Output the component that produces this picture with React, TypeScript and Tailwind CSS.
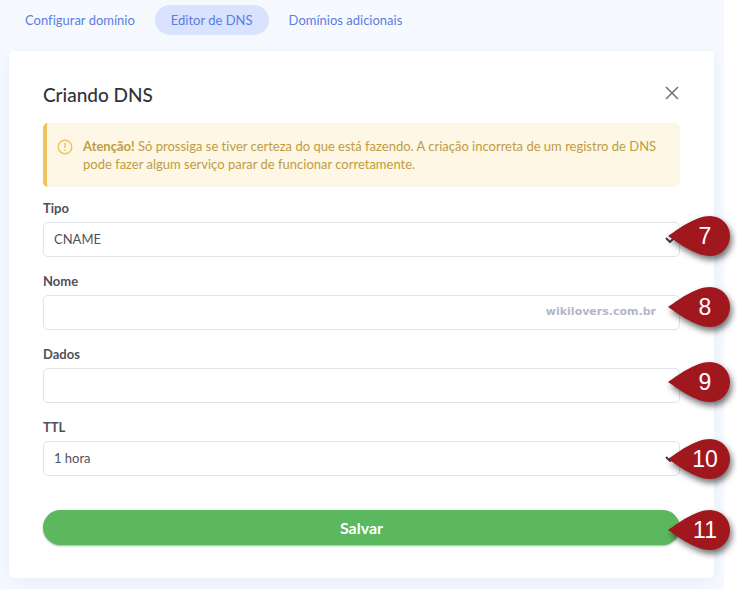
import React from 'react'

const tabs = [
  { label: 'Configurar domínio', active: false },
  { label: 'Editor de DNS', active: true },
  { label: 'Domínios adicionais', active: false },
]

const fieldClass =
  'block h-[35px] w-full appearance-none rounded-[5px] border border-[#dfe3ec] bg-white px-[10px] text-[13px] text-[#50505c] outline-none focus:border-[#5a7de0]'

function Marker({ number, className }: { number: number; className: string }) {
  return (
    <div className={`pointer-events-none absolute -right-[50px] h-10 w-[62px] ${className}`}>
      <svg
        viewBox="0 0 62 40"
        className="block h-full w-full overflow-visible drop-shadow-[2px_4px_3px_rgba(0,0,0,0.55)]"
        aria-hidden="true"
      >
        <path d="M0 20 C9 14 27 0 42 0 A20 20 0 0 1 42 40 C27 40 9 26 0 20 Z" fill="#a0171e" />
      </svg>
      <span className="absolute inset-y-0 right-0 flex w-[50px] items-center justify-center font-['Liberation_Sans',Arial,sans-serif] text-[23px] leading-none text-white">
        {number}
      </span>
    </div>
  )
}

function Chevron() {
  return (
    <svg
      viewBox="0 0 10 6"
      className="pointer-events-none absolute right-[5px] top-[15px] h-[6px] w-[10px]"
      fill="none"
      stroke="#3f4046"
      strokeWidth="2"
      aria-hidden="true"
    >
      <path d="M1 1 L5 5 L9 1" />
    </svg>
  )
}

interface FieldProps {
  id: string
  label: string
  marker: number
  markerClass: string
  children: React.ReactNode
}

function Field({ id, label, marker, markerClass, children }: FieldProps) {
  return (
    <div className="flex flex-col gap-1">
      <label htmlFor={id} className="text-[13px] font-bold leading-5 text-[#50505c]">
        {label}
      </label>
      <div className="relative">
        {children}
        <Marker number={marker} className={markerClass} />
      </div>
    </div>
  )
}

export default function App() {
  return (
    <div className="min-h-screen bg-white pr-[13px] font-[Lato,'Open_Sans',sans-serif] [font-variant-ligatures:none]">
      <div className="min-h-screen bg-[#f6faff] pb-[11px] pl-[9px] pr-[10px] pt-[5px]">
        <nav className="flex h-[30px] items-center gap-1 text-[13px] leading-5">
          {tabs.map((tab) => (
            <a
              key={tab.label}
              href="#"
              className={`flex h-full items-center rounded-full px-4 text-[#5a7de0] ${
                tab.active ? 'bg-[#d9e2ff]' : ''
              }`}
            >
              {tab.label}
            </a>
          ))}
        </nav>

        <main className="mt-4 rounded-[5px] bg-white px-[34px] pb-[33px] pt-7 shadow-[0_4px_16px_rgba(80,110,200,0.09)]">
          <header className="flex items-start justify-between">
            <h1 className="text-[19px] font-medium leading-8 text-[#32323c]">Criando DNS</h1>
            <button type="button" aria-label="Fechar" className="flex h-7 w-4 items-center justify-center text-[#6f6f7c]">
              <svg viewBox="0 0 14 14" className="h-[14px] w-[14px]" fill="none" stroke="currentColor" strokeWidth="1.5" aria-hidden="true">
                <path d="M1 1 L13 13 M13 1 L1 13" />
              </svg>
            </button>
          </header>

          <div
            role="alert"
            className="mt-3 flex gap-[10px] rounded-[5px] border-l-4 border-[#edc55c] bg-[#fef7e6] px-[10px] py-[14px] text-[13px] leading-[18px] text-[#c09c3f]"
          >
            <svg viewBox="0 0 16 16" className="mt-[2px] h-4 w-4 shrink-0" fill="none" stroke="#edc55c" strokeWidth="1.5" aria-hidden="true">
              <circle cx="8" cy="8" r="6.8" />
              <path d="M8 4 V9 M8 10.5 V12" />
            </svg>
            <p>
              <strong className="font-bold">Atenção!</strong> Só prossiga se tiver certeza do que está fazendo. A
              criação incorreta de um registro de DNS pode fazer algum serviço parar de funcionar corretamente.
            </p>
          </div>

          <form className="mt-[11px]" onSubmit={(e) => e.preventDefault()}>
            <div className="flex flex-col gap-[14px]">
              <Field id="tipo" label="Tipo" marker={7} markerClass="-top-1.5">
                <select id="tipo" className={fieldClass} defaultValue="CNAME">
                  <option>CNAME</option>
                </select>
                <Chevron />
              </Field>
              <Field id="nome" label="Nome" marker={8} markerClass="-top-2">
                <input id="nome" type="text" className={fieldClass} />
                <span className="pointer-events-none absolute inset-y-0 right-6 flex items-center font-['DejaVu_Sans',sans-serif] text-[11px] font-bold text-[#b3b6ca]">
                  wikilovers.com.br
                </span>
              </Field>
              <Field id="dados" label="Dados" marker={9} markerClass="-top-1.5">
                <input id="dados" type="text" className={fieldClass} />
              </Field>
              <Field id="ttl" label="TTL" marker={10} markerClass="-top-0.5">
                <select id="ttl" className={fieldClass} defaultValue="1 hora">
                  <option>1 hora</option>
                </select>
                <Chevron />
              </Field>
            </div>

            <div className="relative mt-[34px]">
              <button
                type="submit"
                className="block h-[35px] w-full rounded-full bg-[#5cb85f] text-[16px] font-bold text-white shadow-[0_1px_2px_rgba(60,120,60,0.5)]"
              >
                Salvar
              </button>
              <Marker number={11} className="top-0" />
            </div>
          </form>
        </main>
      </div>
    </div>
  )
}
